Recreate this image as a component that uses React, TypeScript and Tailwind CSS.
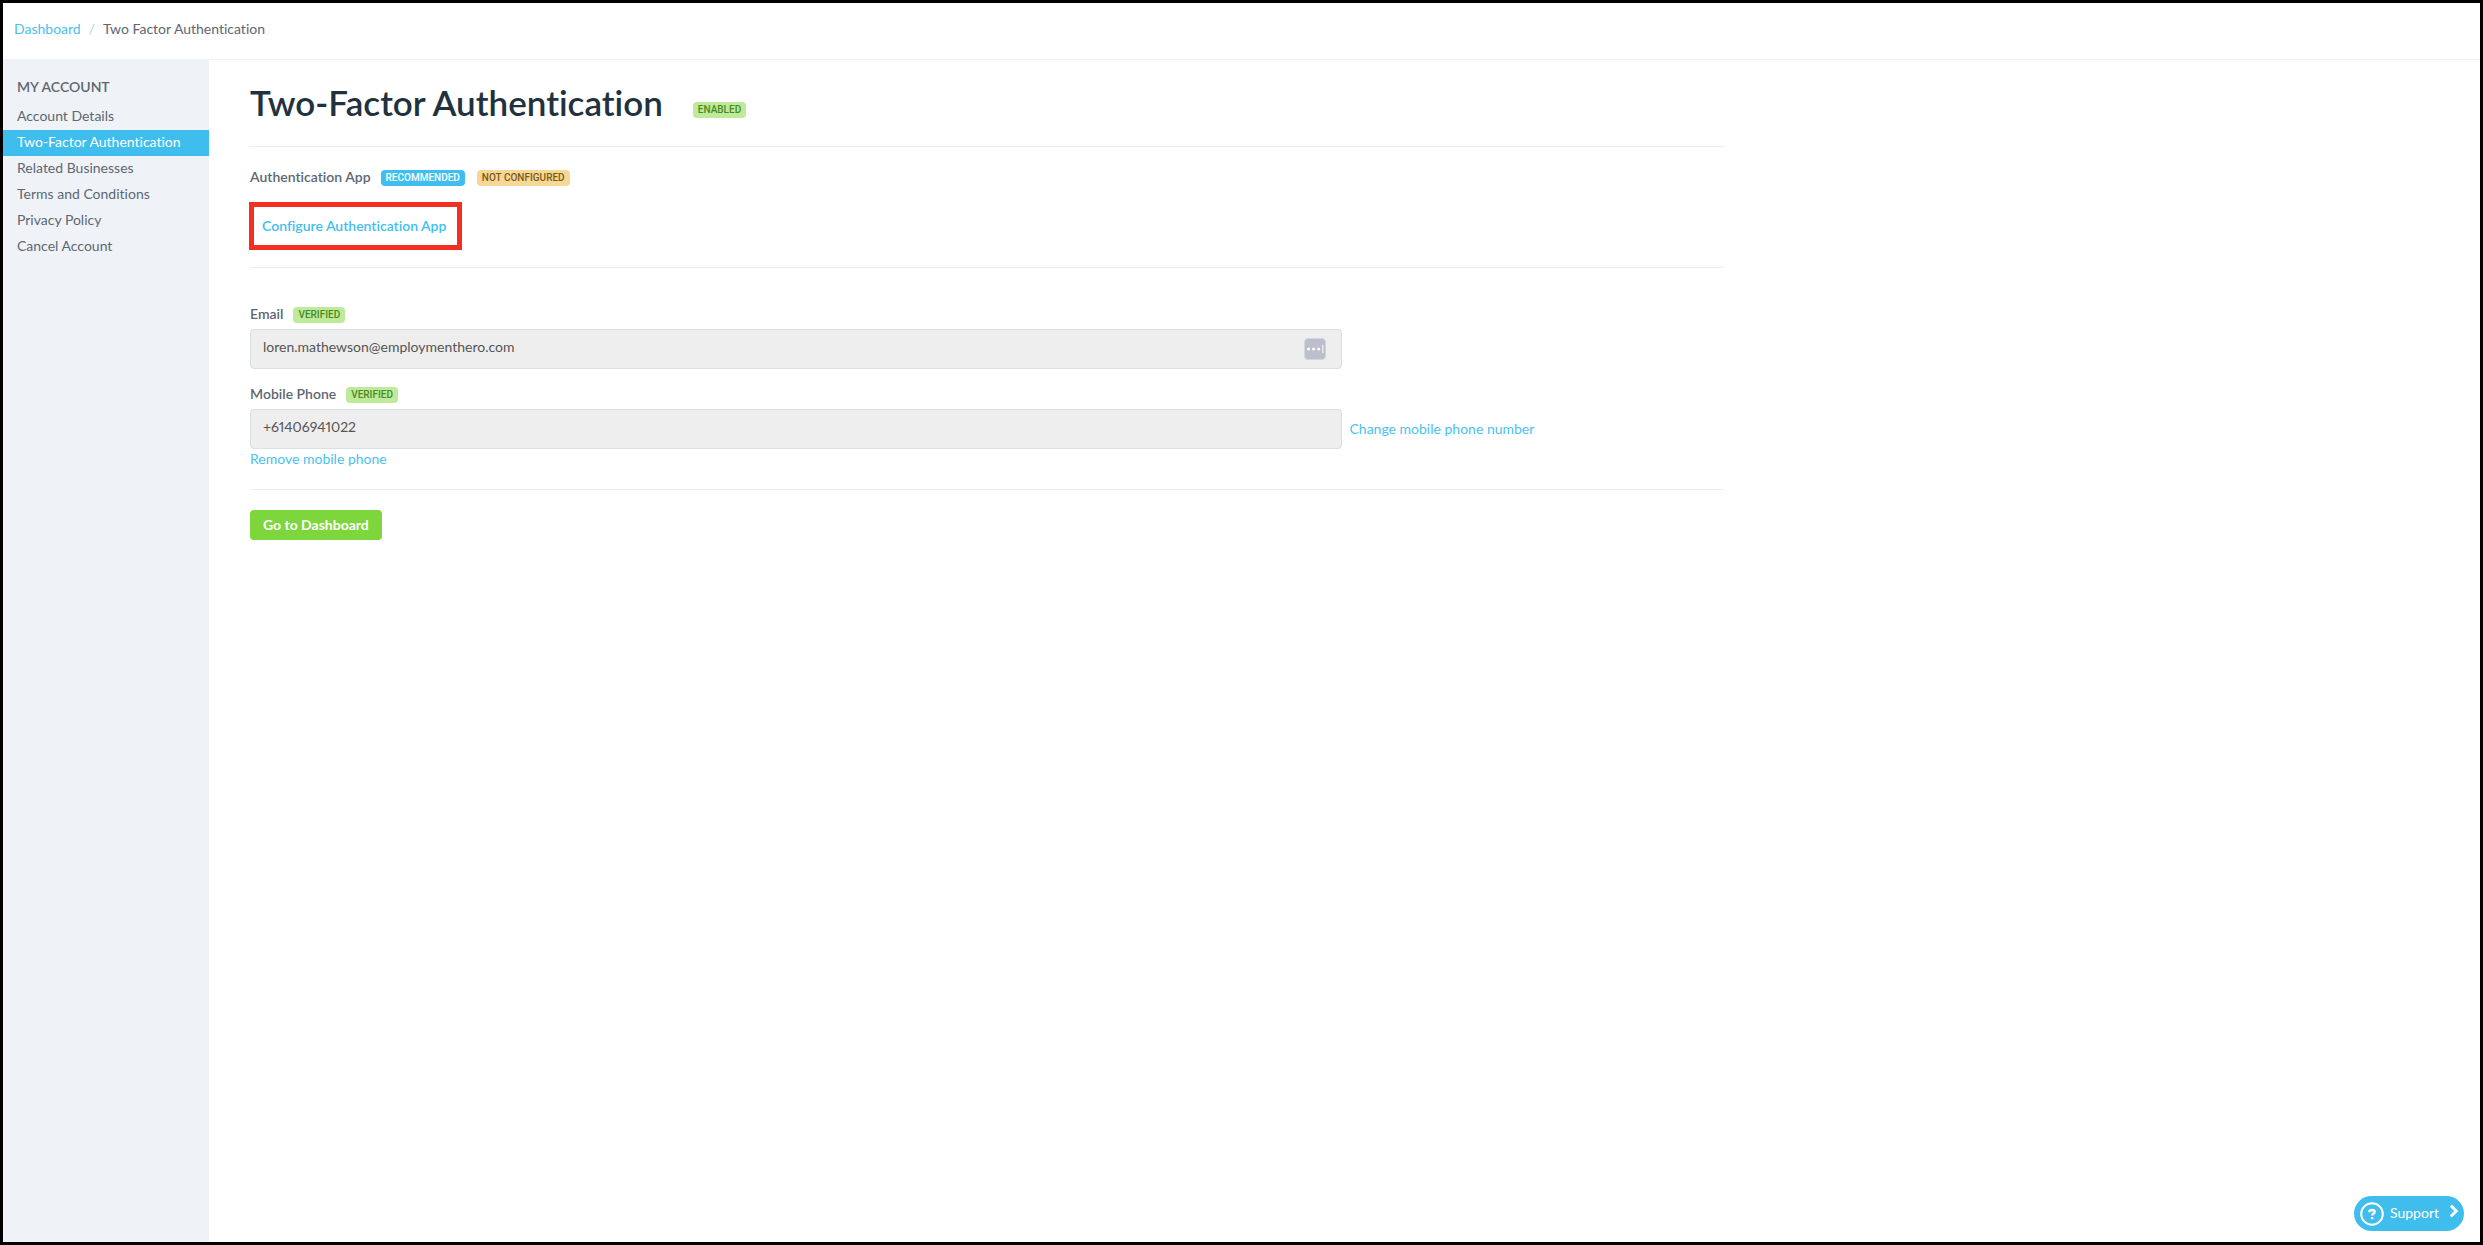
import type { ReactNode } from 'react';

const NAV_ITEMS = [
  { label: 'Account Details', href: '#account-details' },
  { label: 'Two-Factor Authentication', href: '#two-factor', active: true },
  { label: 'Related Businesses', href: '#related-businesses' },
  { label: 'Terms and Conditions', href: '#terms' },
  { label: 'Privacy Policy', href: '#privacy' },
  { label: 'Cancel Account', href: '#cancel' },
];

const BADGE_TONES = {
  success: 'bg-[#bdea9b] text-[#4c8a1f]',
  info: 'bg-[#3fbfef] text-white',
  warning: 'bg-[#f6d797] text-[#7d5a14]',
};

function Badge({ tone, children }: { tone: keyof typeof BADGE_TONES; children: ReactNode }) {
  return (
    <span className={`mt-0.5 rounded px-[5px] font-['Roboto',sans-serif] text-[10px] leading-4 font-medium uppercase ${BADGE_TONES[tone]}`}>
      {children}
    </span>
  );
}

// Password manager button shown inside the email field
function AutofillIcon() {
  return (
    <svg viewBox="0 0 22 22" className="size-[22px]" aria-hidden="true">
      <rect x="0.5" y="0.5" width="21" height="21" rx="3.5" fill="#babfcb" stroke="#d3d6de" />
      <circle cx="4.6" cy="11" r="1.6" fill="#fff" />
      <circle cx="9.6" cy="11" r="1.6" fill="#fff" />
      <circle cx="14.7" cy="11" r="1.6" fill="#fff" />
      <rect x="18.3" y="7" width="1" height="8" fill="#fff" />
    </svg>
  );
}

const inputClass =
  'block h-10 w-full rounded border border-[#d9e0e4] bg-[#eeeeee] px-3 pb-1.5 text-sm text-[#555555] proportional-nums';

export default function App() {
  return (
    <div className="flex min-h-screen flex-col border-[3px] border-black bg-white font-['Lato',sans-serif] text-sm text-[#5d6771] [font-variant-ligatures:none]">
      <header className="flex h-[57px] items-center border-b border-[#eff1f4] px-[11px] pb-1">
        <nav aria-label="Breadcrumb" className="flex gap-2">
          <a href="#dashboard" className="text-[#4ac1ef]">Dashboard</a>
          <span className="text-[#c8ccd0]">/</span>
          <span>Two Factor Authentication</span>
        </nav>
      </header>

      <div className="flex flex-1">
        <aside className="w-[206px] shrink-0 bg-[#eff3f8] pt-3.5">
          <h2 className="mb-1 px-3.5 leading-[26px] font-semibold">MY ACCOUNT</h2>
          <ul>
            {NAV_ITEMS.map(item => (
              <li key={item.href}>
                <a
                  href={item.href}
                  className={`block px-3.5 pb-0.5 leading-6 ${item.active ? 'bg-[#3fbeed] text-white' : ''}`}
                >
                  {item.label}
                </a>
              </li>
            ))}
          </ul>
        </aside>

        <main className="flex-1">
          <div className="ml-[21px] w-2/3 px-5">
            <div className="flex h-[87px] items-start gap-[30px] border-b border-[#ececec] pt-5">
              <h1 className="text-[35px] leading-11 font-semibold text-[#21323e]">Two-Factor Authentication</h1>
              <div className="flex pt-5">
                <Badge tone="success">Enabled</Badge>
              </div>
            </div>

            <section className="border-b border-[#ececec] pt-5 pb-[17px]">
              <div className="flex h-5 items-center gap-2.5">
                <span className="font-semibold">Authentication App</span>
                <div className="flex gap-3">
                  <Badge tone="info">Recommended</Badge>
                  <Badge tone="warning">Not configured</Badge>
                </div>
              </div>
              <button
                type="button"
                className="mt-[15px] -ml-px block h-12 w-[213px] border-5 border-[#f32f22] pl-2 text-left font-semibold text-[#3fbfef]"
              >
                Configure Authentication App
              </button>
            </section>

            <form className="border-b border-[#ececec] pt-9">
              <div className="flex h-5 items-center gap-2.5">
                <label htmlFor="email" className="font-semibold">Email</label>
                <Badge tone="success">Verified</Badge>
              </div>
              <div className="mt-[5px] w-3/4 pr-3.5">
                <div className="relative">
                  <input id="email" type="email" readOnly value="loren.mathewson@employmenthero.com" className={inputClass} />
                  <button type="button" aria-label="Autofill" className="absolute top-[9px] right-4">
                    <AutofillIcon />
                  </button>
                </div>
              </div>

              <div className="mt-[15px] flex h-5 items-center gap-2.5">
                <label htmlFor="phone" className="font-semibold">Mobile Phone</label>
                <Badge tone="success">Verified</Badge>
              </div>
              <div className="mt-[5px] flex items-center">
                <div className="w-3/4 pr-3.5">
                  <input id="phone" type="tel" readOnly value="+61406941022" className={inputClass} />
                </div>
                <a href="#change-phone" className="-ml-1.5 text-[#4ac1ef]">Change mobile phone number</a>
              </div>
              <a href="#remove-phone" className="mb-5 block leading-5 text-[#4ac1ef]">Remove mobile phone</a>
            </form>

            <button
              type="button"
              className="mt-5 h-[30px] rounded bg-[#7dd63b] px-[13px] font-bold text-white"
            >
              Go to Dashboard
            </button>
          </div>
        </main>
      </div>

      <button
        type="button"
        className="fixed right-[19px] bottom-[14px] flex h-[35px] w-[110px] items-center rounded-full bg-[#3fbeed] pl-1.5 text-sm text-white"
      >
        <svg viewBox="0 0 24 24" className="size-6" fill="none" stroke="#fff" aria-hidden="true">
          <circle cx="12" cy="12" r="10.8" strokeWidth="2" />
          <path d="M9.3 10.2C9.3 8.8 10.4 8 12 8s2.7.8 2.7 2.1c0 1.7-2.6 1.7-2.6 3.4" strokeWidth="2.3" />
          <path d="M12.1 15v2.2" strokeWidth="2.5" />
        </svg>
        <span className="ml-1.5 pb-0.5">Support</span>
        <svg viewBox="0 0 10 14" className="mb-1.5 ml-2.5 h-3.5 w-2.5" fill="none" stroke="#fff" strokeWidth="3" aria-hidden="true">
          <path d="M1.8 1.5L7.2 7l-5.4 5.5" />
        </svg>
      </button>
    </div>
  );
}
